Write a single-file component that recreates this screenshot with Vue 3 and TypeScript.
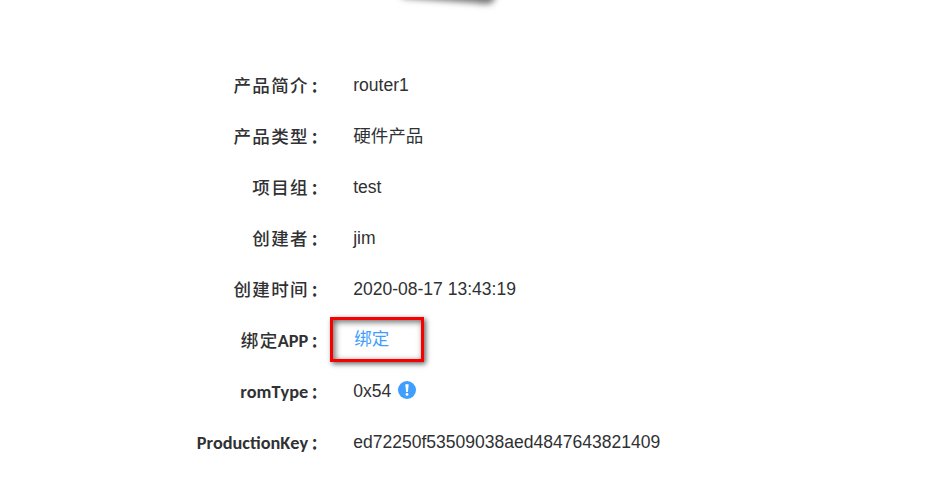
<script setup lang="ts">
interface Field {
  cjk?: string
  latin?: string
  value: string
  kind?: 'link' | 'hint'
}

const fields: Field[] = [
  { cjk: '产品简介', value: 'router1' },
  { cjk: '产品类型', value: '硬件产品' },
  { cjk: '项目组', value: 'test' },
  { cjk: '创建者', value: 'jim' },
  { cjk: '创建时间', value: '2020-08-17 13:43:19' },
  { cjk: '绑定', latin: 'APP', value: '绑定', kind: 'link' },
  { latin: 'romType', value: '0x54', kind: 'hint' },
  { latin: 'ProductionKey', value: 'ed72250f53509038aed4847643821409' },
]
</script>

<template>
  <main class="page">
    <svg class="edge" width="140" height="14" viewBox="0 0 140 14" aria-hidden="true">
      <defs>
        <filter id="soft" x="-20%" y="-150%" width="140%" height="400%">
          <feGaussianBlur stdDeviation="3" />
        </filter>
      </defs>
      <path d="M18 -8H118L112 3Q106 5 96 3L24 -2Z" fill="#777" filter="url(#soft)" />
    </svg>
    <dl class="details">
      <div v-for="field in fields" :key="field.value" class="row">
        <dt class="label">
          <span v-if="field.cjk" class="cjk">{{ field.cjk }}</span>
          <span v-if="field.latin" class="latin">{{ field.latin }}</span>
          <span class="colon">：</span>
        </dt>
        <dd class="value">
          <a v-if="field.kind === 'link'" class="bind">{{ field.value }}</a>
          <template v-else>{{ field.value }}</template>
          <svg v-if="field.kind === 'hint'" class="hint" width="18" height="18" viewBox="0 0 18 18">
            <circle cx="9" cy="9" r="9" fill="#409eff" />
            <path d="M7.3 3.2h3.4L9.9 11H8.1Z" fill="#fff" />
            <circle cx="9" cy="13.4" r="1.4" fill="#fff" />
          </svg>
        </dd>
      </div>
    </dl>
  </main>
</template>

<style>
body {
  background: #fff;
}
</style>

<style scoped>
.page {
  position: relative;
  box-sizing: border-box;
  width: 949px;
  height: 498px;
  padding-top: 60px;
  overflow: hidden;
  color: #303133;
  font-family: 'Liberation Sans', 'Noto Sans CJK SC', sans-serif;
}
.edge {
  position: absolute;
  top: 0;
  left: 380px;
}
.details {
  margin: 0;
}
.row {
  display: grid;
  grid-template-columns: 328px 1fr;
  column-gap: 25.2px;
  height: 51px;
}
.label {
  display: flex;
  justify-content: flex-end;
  line-height: 50px;
  white-space: nowrap;
}
.cjk {
  font-family: 'Noto Sans CJK SC', sans-serif;
  font-size: 17.5px;
  font-weight: 500;
  letter-spacing: 1.4px;
}
.latin {
  margin-right: 0.8px;
  font-family: Carlito, Lato, sans-serif;
  font-size: 18.3px;
  font-weight: 700;
  line-height: 52px;
  font-kerning: none;
}
.cjk + .latin {
  margin-left: -1px;
}
.colon {
  box-sizing: border-box;
  width: 19px;
  padding-left: 2px;
  font-family: 'Noto Sans CJK SC', sans-serif;
  font-size: 14.5px;
  font-weight: 800;
  line-height: 51px;
}
.value {
  display: flex;
  align-items: center;
  height: 50px;
  margin: 0;
  font-size: 17.55px;
  font-weight: 400;
  line-height: 50px;
}
.bind {
  box-sizing: border-box;
  width: 94px;
  height: 45px;
  margin: -1px 0 0 -23.2px;
  padding-left: 21.2px;
  border: 3px solid #f80000;
  color: #409eff;
  line-height: 38px;
  box-shadow: 2px 2px 5px rgba(0, 0, 0, 0.6), inset 2px 2px 6px rgba(0, 0, 0, 0.6);
}
.hint {
  margin: -2px 0 0 6.6px;
}
</style>
